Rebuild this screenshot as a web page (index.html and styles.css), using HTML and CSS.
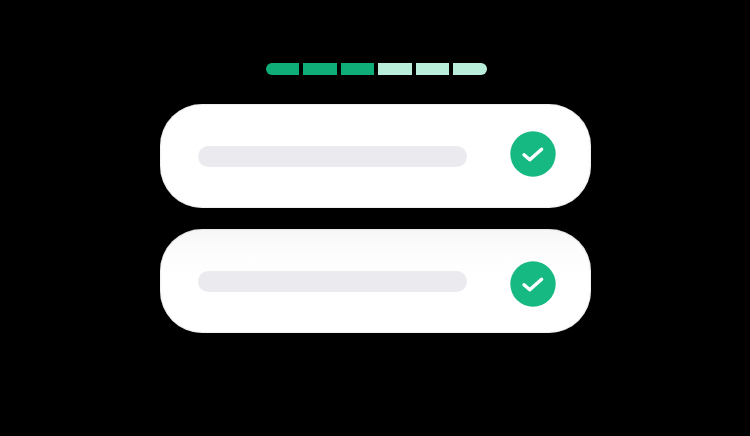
FILE: index.html
```html
<!DOCTYPE html>
<html lang="en">
<head>
<meta charset="utf-8">
<title>Checklist</title>
<link rel="stylesheet" href="styles.css">
</head>
<body>
<main class="stage">
  <div class="progress">
    <span class="seg seg-done seg-first"></span>
    <span class="seg seg-done"></span>
    <span class="seg seg-done"></span>
    <span class="seg seg-todo"></span>
    <span class="seg seg-todo"></span>
    <span class="seg seg-todo seg-last"></span>
  </div>
  <div class="cards">
    <div class="card">
      <span class="line"></span>
      <svg class="check check-up" viewBox="0 0 46 46" aria-hidden="true">
        <circle cx="23" cy="23" r="22.7" fill="#17b983"/>
        <path d="M14 23.8 L19.8 28.8 L31.6 18.2" fill="none" stroke="#fff" stroke-width="3.4" stroke-linecap="round" stroke-linejoin="round"/>
      </svg>
    </div>
    <div class="card card-shaded">
      <span class="line"></span>
      <svg class="check check-down" viewBox="0 0 46 46" aria-hidden="true">
        <circle cx="23" cy="23" r="22.7" fill="#17b983"/>
        <path d="M14 23.8 L19.8 28.8 L31.6 18.2" fill="none" stroke="#fff" stroke-width="3.4" stroke-linecap="round" stroke-linejoin="round"/>
      </svg>
    </div>
  </div>
</main>
</body>
</html>
```
FILE: styles.css
```css
* { box-sizing: border-box; }
html, body { margin: 0; height: 100%; background: #000; overflow: hidden; }
.stage {
  display: flex;
  flex-direction: column;
  align-items: center;
  padding-top: 63px;
  padding-left: 1px;
  height: 436px;
}
.progress {
  display: flex;
  gap: 4px;
  width: 221px;
  height: 12px;
  margin-bottom: 29px;
  margin-left: 1px;
}
.seg { flex: 1; }
.seg-done { background: #0fae79; }
.seg-todo { background: #b9eeda; }
.seg-first { border-radius: 6px 0 0 6px; }
.seg-last { border-radius: 0 6px 6px 0; }
.cards {
  display: flex;
  flex-direction: column;
  gap: 21px;
}
.card {
  display: flex;
  align-items: center;
  justify-content: space-between;
  width: 431px;
  height: 104px;
  padding: 0 35px 0 38px;
  background: #fff;
  border-radius: 42px;
  box-shadow: inset 0 0 2px #c4c4c4;
}
.card-shaded {
  background: linear-gradient(#f6f6f6 0, #fdfdfd 24px, #fff 50px);
}
.line {
  display: block;
  width: 269px;
  height: 21px;
  border-radius: 11px;
  background: #ebeaef;
}
.check { display: block; width: 46px; height: 46px; }
.check-up { margin-bottom: 5px; }
.check-down { margin-top: 6px; }
```
